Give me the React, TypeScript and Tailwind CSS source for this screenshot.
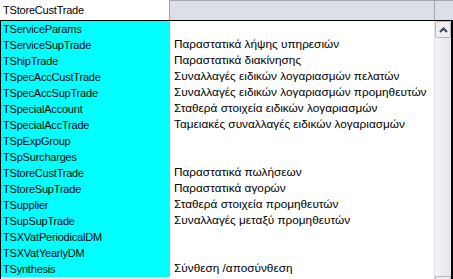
const rows: [string, string][] = [
  ["TServiceParams", ""],
  ["TServiceSupTrade", "Παραστατικά λήψης υπηρεσιών"],
  ["TShipTrade", "Παραστατικά διακίνησης"],
  ["TSpecAccCustTrade", "Συναλλαγές ειδικών λογαριασμών πελατών"],
  ["TSpecAccSupTrade", "Συναλλαγές ειδικών λογαριασμών προμηθευτών"],
  ["TSpecialAccount", "Σταθερά στοιχεία ειδικών λογαριασμών"],
  ["TSpecialAccTrade", "Ταμειακές συναλλαγές ειδικών λογαριασμών"],
  ["TSpExpGroup", ""],
  ["TSpSurcharges", ""],
  ["TStoreCustTrade", "Παραστατικά πωλήσεων"],
  ["TStoreSupTrade", "Παραστατικά αγορών"],
  ["TSupplier", "Σταθερά στοιχεία προμηθευτών"],
  ["TSupSupTrade", "Συναλλαγές μεταξύ προμηθευτών"],
  ["TSXVatPeriodicalDM", ""],
  ["TSXVatYearlyDM", ""],
  ["TSynthesis", "Σύνθεση /αποσύνθεση"],
];

export default function App() {
  return (
    <div
      className="w-[453px] h-[279px] overflow-hidden bg-white text-black leading-none"
      style={{ fontFamily: '"Liberation Sans", Arial, sans-serif' }}
    >
      {/* combo header */}
      <div className="flex h-[20px]">
        <div className="w-[170px] border-r border-[#a3a6ae] bg-white pl-[3px] pt-[5px] text-[11px] tracking-[-0.2px]">
          TStoreCustTrade
        </div>
        <div className="w-[265px] border-r border-t border-[#a3a6ae] bg-[#dcdfe7]" />
        <div className="flex-1 border-t border-[#a3a6ae] bg-[#dcdfe7]" />
      </div>

      {/* dropdown list */}
      <div className="flex h-[259px] border-t border-l border-r-2 border-black">
        <div className="flex-1 overflow-hidden">
          {rows.map(([name, desc]) => (
            <div key={name} className="flex h-[16px] items-center">
              <div className="w-[169px] h-full bg-[#00ffff] pl-[2px] flex items-center text-[11px] tracking-[-0.2px]">
                {name}
              </div>
              <div className="pl-[4px] text-[11.8px]">{desc}</div>
            </div>
          ))}
        </div>
        <div className="w-[17px] flex flex-col bg-gradient-to-r from-[#f2f2f6] to-[#e6e6ee] border-l border-[#e0e0e6]">
          <div className="h-[17px] border border-[#b7b9c2] rounded-[2px] bg-[#eeeef2] flex items-center justify-center">
            <svg width="9" height="6" viewBox="0 0 9 6">
              <path d="M1 5 L4.5 1.5 L8 5" fill="none" stroke="#3d4050" strokeWidth="2" />
            </svg>
          </div>
          <div className="flex-1" />
          <div className="h-[3px] border border-b-0 border-[#b7b9c2] bg-[#eeeef2]" />
        </div>
      </div>
    </div>
  );
}
